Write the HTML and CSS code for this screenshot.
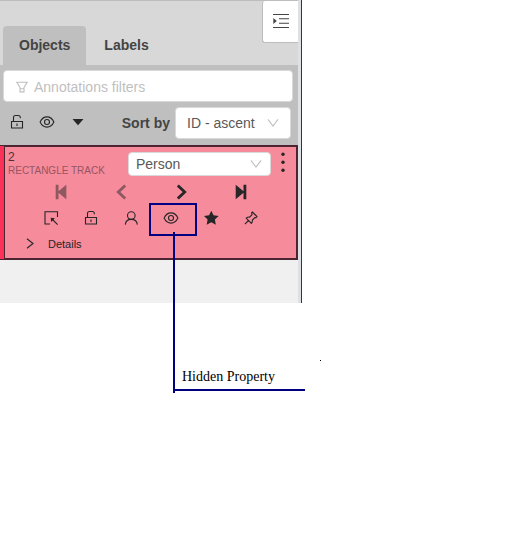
FILE: index.html
```html
<!DOCTYPE html>
<html lang="en">
<head>
<meta charset="utf-8">
<title>Objects</title>
<link rel="stylesheet" href="styles.css">
</head>
<body>
<svg class="defs" aria-hidden="true">
  <symbol id="lock" viewBox="0 0 16 16"><path d="M2.5 7.5h11v6.5H2.5zM4.5 7.5V3.5q0-2 2-2h2.8q2 0 2 2v.8M8 9.6v2.3"/></symbol>
  <symbol id="eye" viewBox="0 0 16 16"><path d="M1.1 8Q3.5 2.9 8 2.9T14.9 8Q12.5 13.1 8 13.1T1.1 8z"/><circle cx="8" cy="8" r="2.5"/></symbol>
  <symbol id="chevron" viewBox="0 0 12 12"><path d="M1 2.3l5 6.8 5-6.8"/></symbol>
</svg>
<main class="panel">
  <header class="tabs">
    <div class="tab active">Objects</div>
    <div class="tab">Labels</div>
    <div class="collapse"><svg class="icon" viewBox="0 0 16 16" width="16" height="16"><path d="M0 1.5h16M6 5.7h10M6 10.2h10M0 14.5h16"/><path class="solid" d="M.3 5l3.5 3L.3 11z"/></svg></div>
  </header>
  <section class="controls">
    <div class="filter"><svg class="icon" viewBox="0 0 12 12" width="12" height="12"><path d="M.8 1.2h10.4L8 6.5v4.4H4V6.5zM4 7.7h4"/></svg><span>Annotations filters</span></div>
    <div class="sort-row">
      <svg class="icon" width="16" height="16"><use href="#lock"/></svg>
      <svg class="icon" width="16" height="16"><use href="#eye"/></svg>
      <svg class="icon caret" viewBox="0 0 12 8" width="12" height="8"><path class="solid" d="M.5 1h11L6 7.3z"/></svg>
      <strong>Sort by</strong>
      <div class="select sort-select"><span>ID - ascent</span><svg class="icon" width="12" height="12"><use href="#chevron"/></svg></div>
    </div>
  </section>
  <section class="item">
    <div class="color-strip"></div>
    <div class="card">
      <div class="heading">
        <div class="identity"><div class="id">2</div><div class="type">RECTANGLE TRACK</div></div>
        <div class="select label-select"><span>Person</span><svg class="icon" width="12" height="12"><use href="#chevron"/></svg></div>
        <svg class="more" viewBox="0 0 4 20" width="4" height="20"><circle cx="2" cy="2.3" r="1.7"/><circle cx="2" cy="10.3" r="1.7"/><circle cx="2" cy="18.2" r="1.7"/></svg>
      </div>
      <div class="navigation">
        <svg class="icon faded" viewBox="0 0 16 16" width="16" height="16"><path class="solid" d="M2.7.7h2.8v6.5L13.3.7v14.6L5.5 8.8v6.5H2.7z"/></svg>
        <svg class="icon thick faded" viewBox="0 0 16 16" width="16" height="16"><path d="M12.2 1.5L5.3 8l6.9 6.5"/></svg>
        <svg class="icon thick" viewBox="0 0 16 16" width="16" height="16"><path d="M4.8 1.5L11.7 8l-6.9 6.5"/></svg>
        <svg class="icon" viewBox="0 0 16 16" width="16" height="16"><path class="solid" d="M13.3.7h-2.8v6.5L2.7.7v14.6l7.8-6.5v6.5h2.8z"/></svg>
      </div>
      <div class="actions">
        <svg class="icon" viewBox="0 0 16 16" width="16" height="16"><path d="M7 14H2V1.7h12.5V7M9 9l5.6 5.6"/><path class="solid" d="M7.7 7.7l4.2.5-3.7 3.7z"/></svg>
        <svg class="icon" width="16" height="16"><use href="#lock"/></svg>
        <svg class="icon" viewBox="0 0 16 16" width="16" height="16"><circle cx="8.3" cy="5.6" r="3.8"/><path d="M2.3 14.6q.4-5.2 6-5.2t6 5.2"/></svg>
        <svg class="icon" width="16" height="16"><use href="#eye"/></svg>
        <svg class="icon" viewBox="0 0 16 16" width="16" height="16"><path class="solid" d="M8.3.7l2.2 4.6 5.1.8-3.7 3.5.9 5.1-4.5-2.4-4.6 2.4.9-5.1L1 6.1l5.1-.8z"/></svg>
        <svg class="icon" viewBox="0 0 16 16" width="16" height="16"><path d="M9.4 2L14 6.6l-1 1-1.1-.1-2.5 2.5q.2 2-1 3.4L3.2 8.1q1.5-1.2 3.4-1l2.5-2.5L8.6 2.8zM5.5 10.5l-3.6 3.6"/></svg>
      </div>
      <div class="details"><svg class="icon" viewBox="0 0 8 12" width="8" height="12"><path d="M1 .8l6 4.7-6 4.7"/></svg><span>Details</span></div>
    </div>
  </section>
</main>
<div class="callout-box"></div>
<div class="callout-stem"></div>
<div class="callout-label">Hidden Property</div>
<div class="callout-dot"></div>
</body>
</html>
```
FILE: styles.css
```css
* { box-sizing: border-box; }
body {
  margin: 0;
  background: #fff;
  color: #262626;
  font-family: "Liberation Sans", Arial, sans-serif;
  font-size: 14px;
}
.defs { position: absolute; width: 0; height: 0; }
.panel {
  width: 302px;
  height: 303px;
  background: linear-gradient(#dde1e6, #dde1e6) 298px 0 / 3px 100% no-repeat, #f0f0f0;
  border-right: 1px solid #33343c;
  padding-right: 3px;
}
.icon { display: block; flex: none; fill: none; stroke: currentColor; stroke-width: 1.1; }
.icon .solid { fill: currentColor; stroke: none; }
.thick { stroke-width: 2.8; }
.faded { opacity: .5; }
.tabs {
  display: flex;
  align-items: flex-end;
  height: 65px;
  padding-left: 3px;
  background: #d8d8d8;
  border-top: 1px solid #bdbdbd;
}
.tab {
  height: 39px;
  padding: 0 16px;
  margin-right: 2px;
  line-height: 38px;
  font-weight: bold;
  color: #444;
  border-radius: 4px 4px 0 0;
}
.tab.active { background: #bfbfbf; }
.collapse {
  align-self: flex-start;
  margin-left: auto;
  width: 36px;
  height: 42px;
  padding: 12px 0 0 10px;
  background: #fff;
  border: 1px solid #bdbdbd;
  border-width: 0 0 1px 1px;
  border-radius: 3px 0 0 3px;
  color: #444;
}
.controls { height: 80px; padding: 5px 7px 0 3px; background: #bfbfbf; }
.filter {
  display: flex;
  align-items: center;
  gap: 6px;
  width: 290px;
  height: 32px;
  padding: 1px 0 0 12px;
  background: #fff;
  border: 1px solid #d9d9d9;
  border-radius: 4px;
  color: #bfbfbf;
}
.sort-row { display: flex; align-items: center; height: 32px; margin-top: 5px; padding-left: 6px; }
.sort-row > .icon { position: relative; top: -1.5px; margin-right: 14px; }
.sort-row > .caret { margin-left: 3px; }
.sort-row strong { margin-left: auto; margin-right: 5px; color: #444; }
.select {
  display: flex;
  align-items: center;
  justify-content: space-between;
  background: #fff;
  border: 1px solid #d9d9d9;
  border-radius: 4px;
  color: #595959;
}
.select .icon { color: #bfbfbf; }
.sort-select { width: 116px; height: 32px; padding: 0 11px; }
.item { display: flex; height: 115px; }
.color-strip { flex: none; width: 4px; background: #fb3158; border: solid #4d2532; border-width: 1px 0; }
.card { flex: 1; min-width: 0; background: #f68b9c; border: 2px solid #4d2532; border-left-width: 1px; }
.heading { display: flex; height: 35px; padding: 5px 0 0 3px; }
.identity { flex: none; width: 120px; }
.id { margin-top: -2px; font-size: 12px; line-height: 14px; color: #4d3037; }
.type { font-size: 10px; line-height: 13px; color: #965560; white-space: nowrap; }
.label-select { flex: none; width: 143px; height: 24px; padding: 0 8px 0 7px; }
.more { flex: none; margin: 0 0 0 10px; fill: #262626; }
.navigation { display: grid; grid-template-columns: repeat(4, 60px); justify-items: center; align-items: center; height: 20px; margin-left: 26px; }
.actions { display: grid; grid-template-columns: repeat(6, 40px); justify-items: center; align-items: center; height: 32px; margin-left: 26px; }
.details { display: flex; align-items: center; gap: 14px; height: 20px; padding-left: 21px; font-size: 11px; }
.callout-box { position: absolute; left: 149px; top: 203px; width: 48px; height: 33px; border: 2px solid #000080; }
.callout-stem { position: absolute; left: 173px; top: 232px; width: 2px; height: 161px; background: #000080; }
.callout-label {
  position: absolute;
  left: 175px;
  top: 366px;
  width: 130px;
  height: 25px;
  padding-left: 7px;
  border-bottom: 2px solid #000080;
  color: #000;
  font: 14px/21px "Liberation Serif", "Times New Roman", serif;
}
.callout-dot { position: absolute; left: 320px; top: 360px; width: 1px; height: 1px; background: #000; }
```
